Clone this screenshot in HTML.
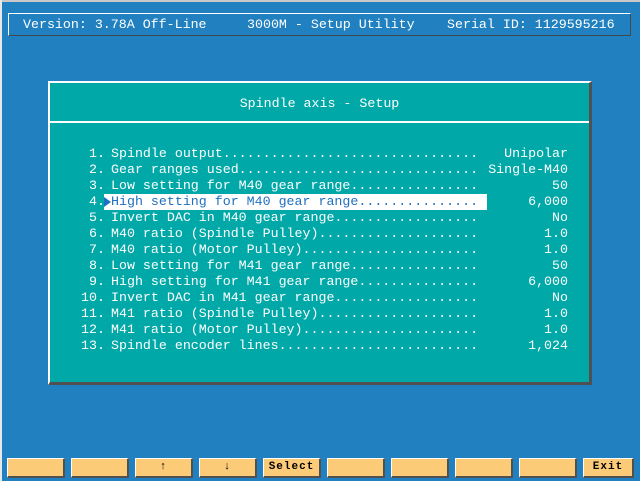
<!DOCTYPE html>
<html><head><style>
*{margin:0;padding:0;box-sizing:border-box}
body{width:640px;height:481px;overflow:hidden;background:#2080c0;font-family:"Liberation Mono",monospace;font-size:13.3px;color:#fff;position:relative}
.top{position:absolute;left:0;top:0;width:640px;height:2px;background:#c8c8c8}
.lft{position:absolute;left:0;top:0;width:2px;height:481px;background:#e8e8e8}
.hdr{position:absolute;left:8px;top:13px;width:623px;height:23px;border:1px solid #fff;border-bottom:1px solid #404850;border-right:1px solid #404850;line-height:21px;white-space:pre}
.hdr span{position:absolute;top:0}
.dlg{position:absolute;left:48px;top:81px;width:544px;height:304px;background:#00a8a8;border-top:2px solid #fff;border-left:2px solid #fff;border-right:3px solid #505050;border-bottom:3px solid #505050}
.sep{position:absolute;left:0;right:0;top:38px;height:2px;background:#fff}
.title{position:absolute;left:0;right:0;top:13px;text-align:center}
.row{position:absolute;left:0;height:16px;line-height:16px;white-space:nowrap}
.num{position:absolute;width:55px;left:0;text-align:right}
.lab{position:absolute;left:61px;width:368px;overflow:hidden}
.val{position:absolute;left:378px;width:140px;text-align:right}
.hlb{position:absolute;left:54px;top:0;width:383px;height:16px;background:#fff}
.hl .lab{color:#2070c0}
.arr{position:absolute;left:54px;top:3px;width:0;height:0;border-top:5px solid transparent;border-bottom:5px solid transparent;border-left:7px solid #2070c0}
.btn{position:absolute;top:458px;height:20px;width:58px;background:#fccb78;border-top:1px solid #fff;border-left:1px solid #fff;border-right:2px solid #505050;border-bottom:2px solid #505050;color:#000;font-weight:bold;font-size:11px;text-align:center;line-height:17px;letter-spacing:1px}
</style></head><body>
<div class="top"></div><div class="lft"></div>
<div class="hdr"><span style="left:14px">Version: 3.78A Off-Line</span><span style="left:238px">3000M - Setup Utility</span><span style="left:438px">Serial ID: 1129595216</span></div>
<div class="dlg">
<div class="title">Spindle axis - Setup</div>
<div class="sep"></div>
<div class="row" style="top:63px"><span class="num">1.</span><span class="lab">Spindle output................................................</span><span class="val">Unipolar</span></div>
<div class="row" style="top:79px"><span class="num">2.</span><span class="lab">Gear ranges used................................................</span><span class="val">Single-M40</span></div>
<div class="row" style="top:95px"><span class="num">3.</span><span class="lab">Low setting for M40 gear range................................................</span><span class="val">50</span></div>
<div class="row hl" style="top:111px"><span class="num">4.</span><span class="hlb"></span><span class="lab">High setting for M40 gear range...............</span><span class="arr"></span><span class="val">6,000</span></div>
<div class="row" style="top:127px"><span class="num">5.</span><span class="lab">Invert DAC in M40 gear range................................................</span><span class="val">No</span></div>
<div class="row" style="top:143px"><span class="num">6.</span><span class="lab">M40 ratio (Spindle Pulley)................................................</span><span class="val">1.0</span></div>
<div class="row" style="top:159px"><span class="num">7.</span><span class="lab">M40 ratio (Motor Pulley)................................................</span><span class="val">1.0</span></div>
<div class="row" style="top:175px"><span class="num">8.</span><span class="lab">Low setting for M41 gear range................................................</span><span class="val">50</span></div>
<div class="row" style="top:191px"><span class="num">9.</span><span class="lab">High setting for M41 gear range................................................</span><span class="val">6,000</span></div>
<div class="row" style="top:207px"><span class="num">10.</span><span class="lab">Invert DAC in M41 gear range................................................</span><span class="val">No</span></div>
<div class="row" style="top:223px"><span class="num">11.</span><span class="lab">M41 ratio (Spindle Pulley)................................................</span><span class="val">1.0</span></div>
<div class="row" style="top:239px"><span class="num">12.</span><span class="lab">M41 ratio (Motor Pulley)................................................</span><span class="val">1.0</span></div>
<div class="row" style="top:255px"><span class="num">13.</span><span class="lab">Spindle encoder lines................................................</span><span class="val">1,024</span></div>
</div>
<div class="btn" style="left:7px"></div>
<div class="btn" style="left:71px"></div>
<div class="btn" style="left:135px">↑</div>
<div class="btn" style="left:199px">↓</div>
<div class="btn" style="left:263px">Select</div>
<div class="btn" style="left:327px"></div>
<div class="btn" style="left:391px"></div>
<div class="btn" style="left:455px"></div>
<div class="btn" style="left:519px"></div>
<div class="btn" style="left:583px;width:51px">Exit</div>
</body></html>
